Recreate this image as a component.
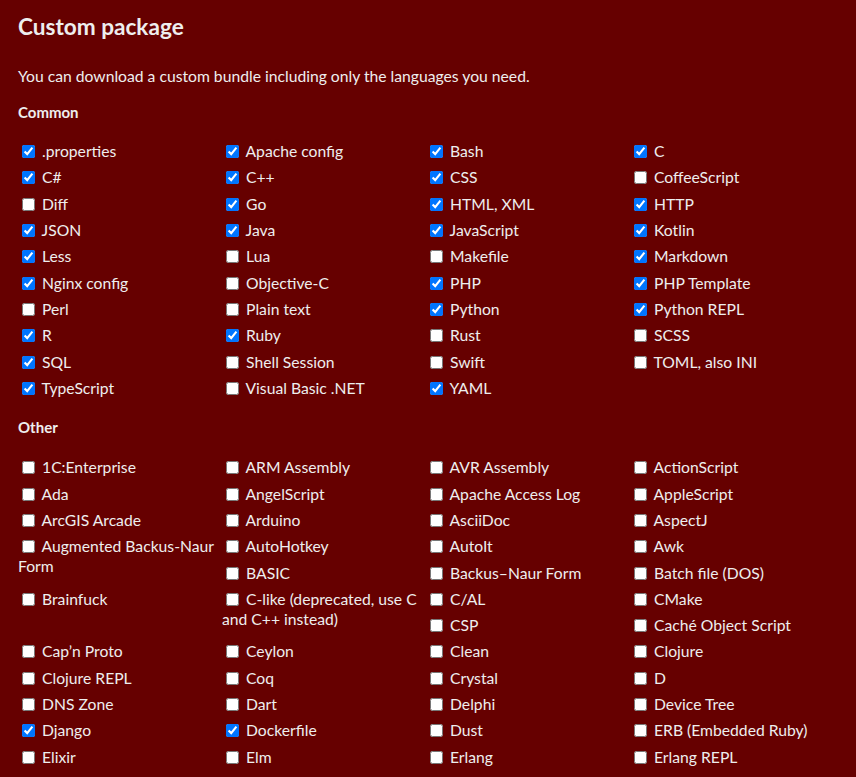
const common: [string, boolean][] = [
  ['.properties', true], ['Apache config', true], ['Bash', true], ['C', true],
  ['C#', true], ['C++', true], ['CSS', true], ['CoffeeScript', false],
  ['Diff', false], ['Go', true], ['HTML, XML', true], ['HTTP', true],
  ['JSON', true], ['Java', true], ['JavaScript', true], ['Kotlin', true],
  ['Less', true], ['Lua', false], ['Makefile', false], ['Markdown', true],
  ['Nginx config', true], ['Objective-C', false], ['PHP', true], ['PHP Template', true],
  ['Perl', false], ['Plain text', false], ['Python', true], ['Python REPL', true],
  ['R', true], ['Ruby', true], ['Rust', false], ['SCSS', false],
  ['SQL', true], ['Shell Session', false], ['Swift', false], ['TOML, also INI', false],
  ['TypeScript', true], ['Visual Basic .NET', false], ['YAML', true],
]

const other: [string, boolean][] = [
  ['1C:Enterprise', false], ['ARM Assembly', false], ['AVR Assembly', false], ['ActionScript', false],
  ['Ada', false], ['AngelScript', false], ['Apache Access Log', false], ['AppleScript', false],
  ['ArcGIS Arcade', false], ['Arduino', false], ['AsciiDoc', false], ['AspectJ', false],
  ['Augmented Backus-Naur Form', false], ['AutoHotkey', false], ['AutoIt', false], ['Awk', false],
  ['BASIC', false], ['Backus–Naur Form', false], ['Batch file (DOS)', false],
  ['Brainfuck', false], ['C-like (deprecated, use C and C++ instead)', false], ['C/AL', false], ['CMake', false],
  ['CSP', false], ['Caché Object Script', false],
  ['Cap’n Proto', false], ['Ceylon', false], ['Clean', false], ['Clojure', false],
  ['Clojure REPL', false], ['Coq', false], ['Crystal', false], ['D', false],
  ['DNS Zone', false], ['Dart', false], ['Delphi', false], ['Device Tree', false],
  ['Django', true], ['Dockerfile', true], ['Dust', false], ['ERB (Embedded Ruby)', false],
  ['Elixir', false], ['Elm', false], ['Erlang', false], ['Erlang REPL', false],
  ['Excel formulae', false], ['Extempore', false], ['F#', false], ['FIX', false],
  ['Flix', false], ['Fortran', false], ['G-code (ISO 6983)', false], ['GAMS', false],
]

function LangList({ items }: { items: [string, boolean][] }) {
  return (
    <div className="w-[816px] after:content-[''] after:block after:clear-both">
      {items.map(([name, on]) => (
        <label key={name} className="float-left w-[204px] py-[3.165px] leading-[20px]">
          <input
            type="checkbox"
            defaultChecked={on}
            className="ml-[4px] mr-[3px] align-[-1px]"
          />{' '}
          {name}
        </label>
      ))}
    </div>
  )
}

export default function App() {
  return (
    <div className="min-h-screen bg-[#660000] text-[#eeeeee] px-[18px] pt-[11px] text-[15.7px] font-['Lato','Liberation_Sans',sans-serif]">
      <h1 className="text-[22.6px] leading-[32px] font-bold">Custom package</h1>

      <p className="mt-[23px] leading-[20px]">
        You can download a custom bundle including only the languages you need.
      </p>

      <h3 className="mt-[16px] font-bold text-[15px] leading-[20px]">Common</h3>
      <div className="mt-[16px]">
        <LangList items={common} />
      </div>

      <h3 className="mt-[16px] font-bold text-[15px] leading-[20px]">Other</h3>
      <div className="mt-[17px]">
        <LangList items={other} />
      </div>
    </div>
  )
}
